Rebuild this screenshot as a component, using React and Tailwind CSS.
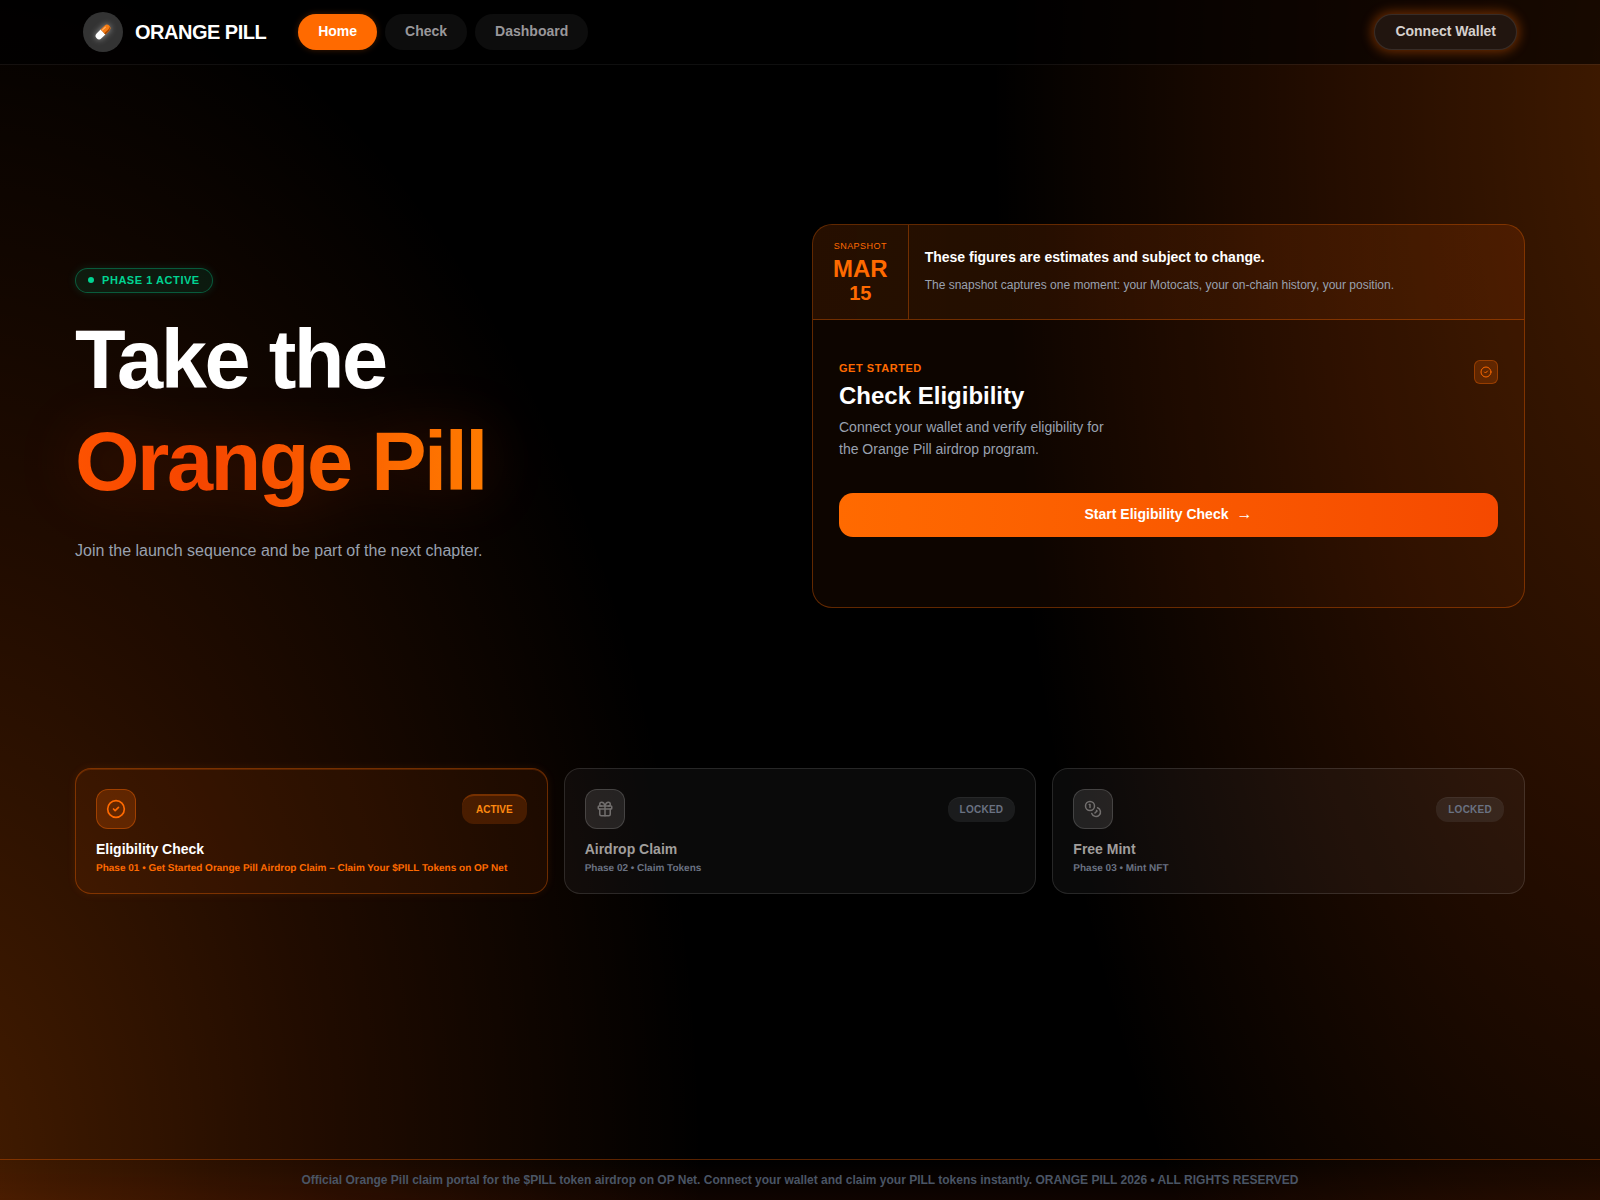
import { CircleCheck, Coins, Gift } from "lucide-react";

const phases = [
  {
    title: "Eligibility Check",
    subtitle:
      "Phase 01 • Get Started Orange Pill Airdrop Claim – Claim Your $PILL Tokens on OP Net",
    icon: CircleCheck,
    active: true,
  },
  {
    title: "Airdrop Claim",
    subtitle: "Phase 02 • Claim Tokens",
    icon: Gift,
    active: false,
  },
  {
    title: "Free Mint",
    subtitle: "Phase 03 • Mint NFT",
    icon: Coins,
    active: false,
  },
];

function PillLogo() {
  return (
    <span className="flex size-10 items-center justify-center rounded-full bg-[#333333]">
      <svg
        width="18"
        height="18"
        viewBox="0 0 18 18"
        className="drop-shadow-[0_0_3px_rgba(255,255,255,0.5)]"
        aria-hidden="true"
      >
        <g transform="rotate(-45 9 9)">
          <path d="M9 5.6H3.4a3.4 3.4 0 0 0 0 6.8H9z" fill="#ffffff" />
          <path d="M9 5.6h5.6a3.4 3.4 0 0 1 0 6.8H9z" fill="#f57c14" />
          <path d="M9 10.9h5.6a3 3 0 0 0 3-1.4 3.4 3.4 0 0 1-3 2.9H9z" fill="#a84600" />
          <path d="M10 7.2h4.2" stroke="#ffb877" strokeWidth="1" strokeLinecap="round" />
        </g>
      </svg>
    </span>
  );
}

function Header() {
  return (
    <header className="relative z-10 h-16 bg-black/60 shadow-[0_1px_0_rgba(255,255,255,0.06)]">
      <div className="mx-auto flex h-full max-w-[1450px] items-center justify-between px-2">
        <div className="flex items-center gap-8">
          <a href="#" className="flex items-center gap-3">
            <PillLogo />
            <span className="text-xl font-bold tracking-tight text-white">ORANGE PILL</span>
          </a>

          <nav className="flex items-center gap-2 text-sm font-bold">
            <a
              href="#"
              className="flex h-9 items-center rounded-full bg-[#ff6a00] px-5 pb-0.5 text-white shadow-[0_0_6px_rgba(255,106,0,0.25)]"
            >
              Home
            </a>
            <a
              href="#check"
              className="flex h-9 items-center rounded-full bg-white/5 px-5 pb-0.5 text-[#99979a]"
            >
              Check
            </a>
            <a
              href="#dashboard"
              className="flex h-9 items-center rounded-full bg-white/5 px-5 pb-0.5 text-[#99979a]"
            >
              Dashboard
            </a>
          </nav>
        </div>

        <button className="h-9 rounded-full border border-white/10 bg-[#21150f] px-5 pb-0.5 text-sm font-bold text-[#d6d0cd] shadow-[0_0_12px_2px_rgba(255,106,0,0.4)]">
          Connect Wallet
        </button>
      </div>
    </header>
  );
}

function Intro() {
  return (
    <div className="flex flex-col items-start">
      <span className="flex items-center gap-2 rounded-full border border-[#00d492]/35 bg-[#00d492]/10 px-3 py-1 text-[11px] leading-[15px] font-bold tracking-wider text-[#00d492] shadow-[0_0_8px_rgba(0,212,146,0.15)]">
        <span className="size-1.5 rounded-full bg-[#00d492]" />
        PHASE 1 ACTIVE
      </span>

      <h1 className="mt-4 text-[83px] leading-[102px] font-bold tracking-[-0.03em] text-white">
        Take the
        <br />
        <span className="bg-[linear-gradient(90deg,#fd5200,#f64500_30%,#ff7b00)] bg-clip-text text-transparent drop-shadow-[0_0_30px_rgba(255,70,0,0.2)]">
          Orange Pill
        </span>
      </h1>

      <p className="mt-6 text-base leading-7 text-[#99a1af]">
        Join the launch sequence and be part of the next chapter.
      </p>
    </div>
  );
}

function EligibilityCard() {
  return (
    <div className="min-h-96 overflow-hidden rounded-[20px] border border-[#ff6a00]/35 bg-[#ff6a00]/5">
      <div className="flex border-b border-[#ff6a00]/35 bg-[linear-gradient(90deg,rgba(255,106,0,0.1),rgba(255,90,0,0.07))]">
        <div className="flex flex-col items-center border-r border-[#ff6a00]/35 px-5 py-3.5 font-bold text-[#ff6a00]">
          <span className="mb-1 text-[9px] leading-[14px] font-normal tracking-wider">
            SNAPSHOT
          </span>
          <span className="text-2xl leading-6">MAR</span>
          <span className="text-xl leading-6">15</span>
        </div>
        <div className="flex flex-col justify-center gap-2 px-4 pb-0.5">
          <p className="text-sm leading-5 font-bold text-white">
            These figures are estimates and subject to change.
          </p>
          <p className="text-xs leading-5 text-[#99a1af]">
            The snapshot captures one moment: your Motocats, your on-chain history, your position.
          </p>
        </div>
      </div>

      <div className="px-[26px] pt-10">
        <div className="flex items-start justify-between">
          <div>
            <p className="text-[11px] leading-4 font-bold tracking-wider text-[#ff6a00]">
              GET STARTED
            </p>
            <h2 className="mt-1 text-2xl font-bold text-white">Check Eligibility</h2>
            <p className="mt-1 max-w-[280px] text-sm leading-[22px] text-[#99a1af]">
              Connect your wallet and verify eligibility for the Orange Pill airdrop program.
            </p>
          </div>
          <span className="flex size-6 items-center justify-center rounded-md border border-[#ff6a00]/35 bg-[#ff6a00]/20 text-[#ff6a00]">
            <CircleCheck size={12} />
          </span>
        </div>

        <button className="mt-[33px] flex h-11 w-full items-center justify-center gap-2 rounded-[14px] bg-linear-to-r from-[#ff6a00] to-[#f54900] pb-0.5 text-sm font-bold text-white">
          Start Eligibility Check
          <span aria-hidden="true" className="text-base font-normal">
            →
          </span>
        </button>
      </div>
    </div>
  );
}

function PhaseCard({ phase }) {
  const Icon = phase.icon;

  return (
    <div
      className={
        phase.active
          ? "rounded-2xl border border-[#ff6a00]/35 bg-[#ff6a00]/8 px-5 pt-5 pb-4 shadow-[0_0_8px_rgba(255,106,0,0.1),inset_0_1px_0_rgba(255,106,0,0.2)]"
          : "rounded-2xl border border-white/12 bg-white/4 px-5 pt-5 pb-4"
      }
    >
      <div className="flex items-center justify-between">
        <span
          className={
            phase.active
              ? "flex size-10 items-center justify-center rounded-xl border border-[#ff6a00]/40 bg-[#ff6a00]/20 text-[#ff6a00]"
              : "flex size-10 items-center justify-center rounded-xl border border-white/15 bg-white/10 text-[#726f6e]"
          }
        >
          <Icon size={phase.active ? 20 : 18} />
        </span>
        <span
          className={
            phase.active
              ? "rounded-xl border-t-2 border-[#ff6a00]/25 bg-[#ff6a00]/18 px-3.5 py-1.5 text-[10px] leading-4 font-bold text-[#ff8a10]"
              : "rounded-xl border-t border-white/5 bg-[#99a1af]/12 px-3 py-1 text-[10px] leading-4 font-bold tracking-wide text-[#6a7282]"
          }
        >
          {phase.active ? "ACTIVE" : "LOCKED"}
        </span>
      </div>

      <h3
        className={
          phase.active
            ? "mt-2.5 text-sm leading-5 font-bold text-white"
            : "mt-2.5 text-sm leading-5 font-bold text-[#a09e9c]"
        }
      >
        {phase.title}
      </h3>
      <p
        className={
          phase.active
            ? "mt-0.5 text-[10px] leading-4 font-bold text-[#ff6a00] [text-rendering:geometricPrecision]"
            : "mt-0.5 text-[10px] leading-4 font-bold text-[#6a7282] [text-rendering:geometricPrecision]"
        }
      >
        {phase.subtitle}
      </p>
    </div>
  );
}

function App() {
  return (
    <div className="flex min-h-screen flex-col bg-black bg-[radial-gradient(ellipse_48%_105%_at_-4%_98%,rgba(255,106,0,0.27),rgba(255,90,0,0.13)_50%,transparent),radial-gradient(ellipse_42%_135%_at_104%_8%,rgba(255,106,0,0.26),rgba(255,90,0,0.14)_50%,transparent)] font-['Liberation_Sans',Arial,sans-serif]">
      <Header />

      <main className="mx-auto w-full max-w-[1450px] flex-1">
        <section className="grid grid-cols-2 items-center gap-6 py-40">
          <Intro />
          <EligibilityCard />
        </section>

        <section className="grid grid-cols-3 gap-4">
          {phases.map((phase) => (
            <PhaseCard key={phase.title} phase={phase} />
          ))}
        </section>
      </main>

      <footer className="border-t border-[#ff6a00]/30 bg-linear-to-b from-transparent to-[#ff4000]/6 py-3 text-center text-xs font-bold text-[#4a5565]">
        Official Orange Pill claim portal for the $PILL token airdrop on OP Net. Connect your wallet
        and claim your PILL tokens instantly. ORANGE PILL 2026 • ALL RIGHTS RESERVED
      </footer>
    </div>
  );
}

export default App;
